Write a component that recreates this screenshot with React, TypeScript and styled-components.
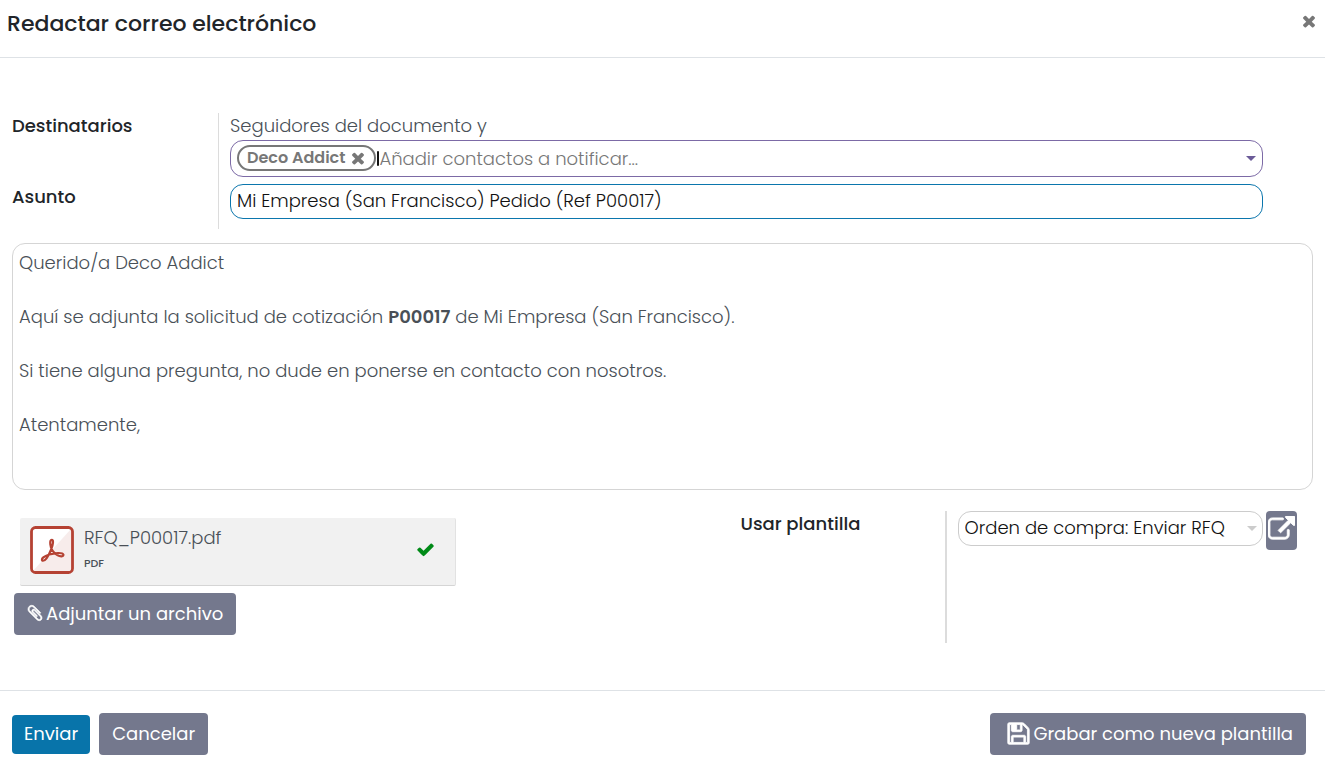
import React from "react";
import styled, { createGlobalStyle } from "styled-components";

const GlobalStyle = createGlobalStyle`
  *, *::before, *::after { box-sizing: border-box; }
  body {
    margin: 0;
    background: #fff;
    color: #495057;
    font: 300 18px/27px Poppins, Inter, "Open Sans", sans-serif;
  }
  button, input, select { font: inherit; }
  p { margin: 0; }
`;

const faPaths = {
  times:
    "M1490 1322q0 40-28 68l-136 136q-28 28-68 28t-68-28l-294-294-294 294q-28 28-68 28t-68-28l-136-136q-28-28-28-68t28-68l294-294-294-294q-28-28-28-68t28-68l136-136q28-28 68-28t68 28l294 294 294-294q28-28 68-28t68 28l136 136q28 28 28 68t-28 68l-294 294 294 294q28 28 28 68z",
  check:
    "M1671 566q0 40-28 68l-724 724-136 136q-28 28-68 28t-68-28l-136-136-362-362q-28-28-28-68t28-68l136-136q28-28 68-28t68 28l294 295 656-657q28-28 68-28t68 28l136 136q28 28 28 68z",
  external:
    "M1408 928v320q0 119-84.5 203.5t-203.5 84.5h-832q-119 0-203.5-84.5t-84.5-203.5v-832q0-119 84.5-203.5t203.5-84.5h704q14 0 23 9t9 23v64q0 14-9 23t-23 9h-704q-66 0-113 47t-47 113v832q0 66 47 113t113 47h832q66 0 113-47t47-113v-320q0-14 9-23t23-9h64q14 0 23 9t9 23zm384-864v512q0 26-19 45t-45 19-45-19l-176-176-652 652q-10 10-23 10t-23-10l-114-114q-10-10-10-23t10-23l652-652-176-176q-19-19-19-45t19-45 45-19h512q26 0 45 19t19 45z",
  floppy:
    "M512 1536h768v-384h-768v384zm896 0h128v-896q0-14-10-38.5t-20-34.5l-281-281q-10-10-34-20t-39-10v416q0 40-28 68t-68 28h-576q-40 0-68-28t-28-68v-416h-128v1280h128v-416q0-40 28-68t68-28h832q40 0 68 28t28 68v416zm-384-928v-320q0-13-9.5-22.5t-22.5-9.5h-192q-13 0-22.5 9.5t-9.5 22.5v320q0 13 9.5 22.5t22.5 9.5h192q13 0 22.5-9.5t9.5-22.5zm640 32v928q0 40-28 68t-68 28h-1344q-40 0-68-28t-28-68v-1344q0-40 28-68t68-28h928q40 0 88 20t76 48l280 280q28 28 48 76t20 88z",
  paperclip:
    "M1596 1385q0 117-79 196t-196 79q-135 0-235-100l-777-776q-113-115-113-271 0-159 110-270t269-111q158 0 273 113l605 606q10 10 10 22 0 16-30.5 46.5t-46.5 30.5q-13 0-23-10l-606-607q-79-77-181-77-106 0-179 75t-73 181q0 105 76 181l776 777q63 63 145 63 64 0 106-42t42-106q0-82-63-145l-581-581q-26-24-60-24-29 0-48 19t-19 48q0 32 25 59l410 410q10 10 10 22 0 16-31 47t-47 31q-12 0-22-10l-410-410q-63-61-63-149 0-82 57-139t139-57q88 0 149 63l581 581q100 98 100 235z",
};

const IconSvg = styled.svg`
  display: block;
  flex: none;
  fill: currentColor;
`;

function Icon({ name, size, bold }: { name: keyof typeof faPaths; size: number; bold?: boolean }) {
  return (
    <IconSvg viewBox="0 0 1792 1792" width={size} height={size} aria-hidden="true">
      <path d={faPaths[name]} stroke="currentColor" strokeWidth={bold ? 60 : 0} />
    </IconSvg>
  );
}

const Header = styled.header`
  display: flex;
  justify-content: space-between;
  height: 58px;
  padding: 8px 7px;
  border-bottom: 1px solid #dee2e6;
`;

const Title = styled.h1`
  margin: 0;
  color: #212529;
  font-size: 22px;
  font-weight: 500;
  line-height: 32px;
`;

const IconButton = styled.button`
  display: flex;
  align-items: center;
  justify-content: center;
  padding: 0;
  border: 0;
  background: none;
  color: #777;
  cursor: pointer;
`;

const CloseButton = styled(IconButton)`
  width: 18px;
  height: 26px;
`;

const Body = styled.main`
  padding: 55px 12px 47px;
`;

const FieldGroup = styled.div`
  display: grid;
  grid-template-columns: 206px 1fr;
  margin-right: 50px;
`;

const FieldLabel = styled.label`
  color: #212529;
  font-weight: 500;
  line-height: 25px;
`;

const FieldCell = styled.div<{ $last?: boolean }>`
  padding-left: 11px;
  padding-bottom: ${(p) => (p.$last ? 10 : 7)}px;
  border-left: 1px solid #dcdcdc;
`;

const FieldText = styled.p`
  padding-bottom: 2px;
  line-height: 25px;
`;

const TagsBox = styled.div`
  display: flex;
  align-items: flex-start;
  height: 37px;
  padding: 4px 6px;
  border: 1px solid #7c6aa6;
  border-radius: 13px;
  color: #6b5b98;
`;

const Tag = styled.span`
  display: flex;
  align-items: center;
  gap: 4px;
  height: 26px;
  margin-right: 1px;
  padding: 0 7px 0 8px;
  border: 2px solid #777;
  border-radius: 13px;
  color: #777;
  font-size: 16px;
  font-weight: 600;
  line-height: 22px;
`;

const Caret = styled.span`
  width: 2px;
  height: 15px;
  margin-top: 6px;
  border-radius: 1px;
  background: #111;
`;

const TagInput = styled.input`
  flex: 1;
  min-width: 0;
  height: 27px;
  padding: 0;
  border: 0;
  outline: 0;
  background: none;
  color: #212529;
  &::placeholder { color: #777; opacity: 1; }
`;

const Arrow = styled.span`
  flex: none;
  align-self: center;
  width: 0;
  height: 0;
  border: 5px solid transparent;
  border-top-color: currentColor;
  border-bottom: 0;
`;

const SubjectInput = styled.input`
  display: block;
  width: 100%;
  height: 35px;
  padding: 0 6px 2px;
  border: 1px solid #0b76ad;
  border-radius: 13px;
  outline: 0;
  color: #111;
`;

const Editor = styled.div`
  min-height: 247px;
  margin-top: 14px;
  padding: 5px 6px;
  border: 1px solid #d5d5d5;
  border-radius: 13px;
  outline: 0;
  p { margin-bottom: 27px; }
  b { font-weight: 600; }
`;

const Lower = styled.div`
  display: grid;
  grid-template-columns: 56% 1fr;
  padding-top: 21px;
`;

const Attachments = styled.section`
  display: flex;
  flex-direction: column;
  align-items: flex-start;
  gap: 7px;
  padding: 7px 2px 0;
`;

const FileCard = styled.div`
  display: flex;
  align-items: center;
  gap: 10px;
  width: 436px;
  height: 68px;
  margin-left: 6px;
  padding: 0 20px 4px 10px;
  border-bottom: 1px solid #d5d5d5;
  border-right: 1px solid #e2e2e2;
  border-radius: 2px;
  background: #f1f1f1;
`;

const FileInfo = styled.div`
  flex: 1;
`;

const FileType = styled.p`
  font-size: 11px;
  font-weight: 500;
  line-height: 22px;
`;

const Success = styled.span`
  color: #008a17;
`;

const Button = styled.button<{ $variant?: "primary" | "attach" | "save" }>`
  display: flex;
  align-items: center;
  justify-content: center;
  gap: 2px;
  height: ${(p) => (p.$variant === "primary" ? 39 : 42)}px;
  padding: ${(p) =>
    p.$variant === "primary"
      ? "0 12px 2px"
      : p.$variant === "attach"
        ? "0 13px 2px 12px"
        : p.$variant === "save"
          ? "0 13px 2px 16px"
          : "0 13px 2px"};
  border: 0;
  border-radius: 4px;
  background: ${(p) => (p.$variant === "primary" ? "#0874aa" : "#74788d")};
  color: #fff;
  font-weight: 400;
  white-space: nowrap;
  cursor: pointer;
`;

const TemplateGroup = styled.section`
  display: grid;
  grid-template-columns: 204px 1fr;
  height: 132px;
`;

const TemplateCell = styled.div`
  display: flex;
  align-items: flex-start;
  gap: 3px;
  padding: 0 16px 0 11px;
  border-left: 2px solid #dcdcdc;
`;

const SelectWrap = styled.div`
  display: grid;
  flex: 1;
  align-items: center;
  color: #ccc;
  > * { grid-area: 1 / 1; }
  > ${Arrow} { justify-self: end; margin-right: 6px; }
`;

const TemplateSelect = styled.select`
  appearance: none;
  width: 100%;
  height: 35px;
  padding: 0 6px 2px;
  border: 1px solid #ccc;
  border-radius: 13px;
  background: #fff;
  color: #111;
`;

const ExternalButton = styled(IconButton)`
  align-items: flex-start;
  width: 31px;
  height: 39px;
  padding-top: 5px;
  border-radius: 4px;
  background: #74788d;
  color: #fff;
`;

const Footer = styled.footer`
  display: flex;
  align-items: center;
  gap: 9px;
  padding: 22px 19px 22px 12px;
  border-top: 1px solid #dee2e6;
  > :last-child { margin-left: auto; }
`;

function PdfIcon() {
  return (
    <IconSvg viewBox="0 0 44 48" width={44} height={48} aria-hidden="true">
      <rect x="1.5" y="1.5" width="41" height="45" rx="4" fill="#fff" />
      <path d="M41 3v42H3z" fill="#f7eceb" />
      <rect x="1.5" y="1.5" width="41" height="45" rx="4" fill="none" stroke="#b54233" strokeWidth="2.8" />
      <path
        d="M12.3 34.6c-1.6-1.8 2-4.6 7-6.1 5-1.5 13.2-2.4 14 0 .8 2.2-3 2.4-6 .6-4-2.4-6.6-6.8-7-11-.3-3 .3-4.3 1.4-4.3 2 0 1.6 4.2-.6 9.7-2 5-5.8 12.2-8.8 11.1z"
        fill="none"
        stroke="#b54233"
        strokeWidth="2.2"
        strokeLinejoin="round"
      />
    </IconSvg>
  );
}

export default function App() {
  return (
    <>
      <GlobalStyle />
      <Header>
        <Title>Redactar correo electrónico</Title>
        <CloseButton aria-label="Cerrar"><Icon name="times" size={18} /></CloseButton>
      </Header>
      <Body>
        <FieldGroup>
          <FieldLabel htmlFor="recipients">Destinatarios</FieldLabel>
          <FieldCell>
            <FieldText>Seguidores del documento y</FieldText>
            <TagsBox>
              <Tag>
                Deco Addict
                <IconButton aria-label="Quitar Deco Addict"><Icon name="times" size={18} /></IconButton>
              </Tag>
              <Caret />
              <TagInput id="recipients" placeholder="Añadir contactos a notificar..." />
              <Arrow />
            </TagsBox>
          </FieldCell>
          <FieldLabel htmlFor="subject">Asunto</FieldLabel>
          <FieldCell $last>
            <SubjectInput id="subject" defaultValue="Mi Empresa (San Francisco) Pedido (Ref P00017)" />
          </FieldCell>
        </FieldGroup>
        <Editor contentEditable suppressContentEditableWarning role="textbox" aria-label="Mensaje">
          <p>Querido/a Deco Addict</p>
          <p>Aquí se adjunta la solicitud de cotización <b>P00017</b> de Mi Empresa (San Francisco).</p>
          <p>Si tiene alguna pregunta, no dude en ponerse en contacto con nosotros.</p>
          <p>Atentamente,</p>
        </Editor>
        <Lower>
          <Attachments>
            <FileCard>
              <PdfIcon />
              <FileInfo>
                <FieldText>RFQ_P00017.pdf</FieldText>
                <FileType>PDF</FileType>
              </FileInfo>
              <Success><Icon name="check" size={19} /></Success>
            </FileCard>
            <Button $variant="attach"><Icon name="paperclip" size={18} bold />Adjuntar un archivo</Button>
          </Attachments>
          <TemplateGroup>
            <FieldLabel htmlFor="template">Usar plantilla</FieldLabel>
            <TemplateCell>
              <SelectWrap>
                <TemplateSelect id="template">
                  <option>Orden de compra: Enviar RFQ</option>
                </TemplateSelect>
                <Arrow />
              </SelectWrap>
              <ExternalButton aria-label="Abrir plantilla"><Icon name="external" size={27} bold /></ExternalButton>
            </TemplateCell>
          </TemplateGroup>
        </Lower>
      </Body>
      <Footer>
        <Button $variant="primary">Enviar</Button>
        <Button>Cancelar</Button>
        <Button $variant="save"><Icon name="floppy" size={25} bold />Grabar como nueva plantilla</Button>
      </Footer>
    </>
  );
}
